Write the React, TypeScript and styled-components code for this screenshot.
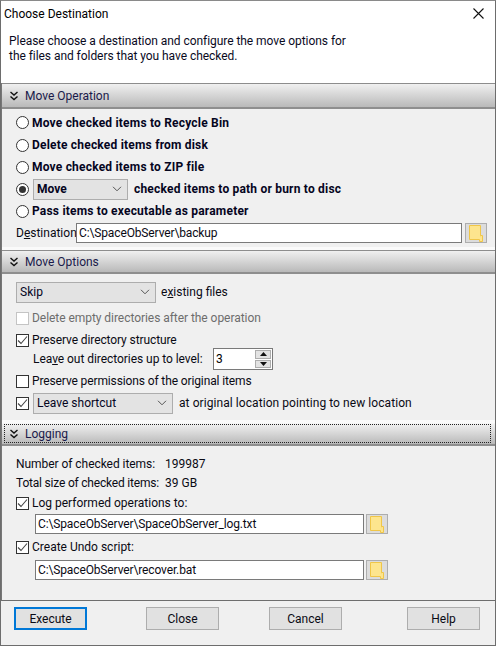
import React from "react";
import styled, { createGlobalStyle } from "styled-components";

const Global = createGlobalStyle`
  html, body { margin: 0; padding: 0; background: #fff; }
  body { font-family: Roboto, "Noto Sans", "Liberation Sans", sans-serif; font-size: 12px; color: #000; }
  * { box-sizing: border-box; }
`;

const Window = styled.div`
  width: 496px; height: 646px; display: flex; flex-direction: column;
  border: 1px solid #6d6d6d; border-top-color: #8a8a8a; background: #f0f0f0; overflow: hidden;
`;
const TitleBar = styled.div`
  height: 25px; flex: none; background: #fff; display: flex; align-items: center; justify-content: space-between;
  padding: 0 11px 0 3px; font-size: 12px;
`;
const Intro = styled.div`
  height: 57px; flex: none; background: #fff; padding: 8px 8px 0; line-height: 15px; font-size: 12px; color: #0a0a1e;
  letter-spacing: -0.05px;
`;
const Content = styled.div`
  flex: 1; display: flex; flex-direction: column; border-left: 1px solid #777; border-bottom: 1px solid #6e6e6e; min-height: 0;
`;
const Band = styled.div<{ $focus?: boolean; $h: number }>`
  position: relative;
  height: ${p => p.$h}px; flex: none; display: flex; align-items: center; gap: 6px; padding: 0 0 0 7px;
  font-size: 12px; color: #1a1a4a;
  border-top: 1px solid ${p => p.$focus ? "#f6f6f6" : "#8d8d8d"};
  border-bottom: 2px solid #8e8e8e;
  background: linear-gradient(#f0f0f0, #b9b9b9);
  ${p => p.$focus ? `&::after { content: ""; position: absolute; inset: 0 4px 1px 2px; border: 1px dotted #222; }` : ""}
`;
const WhiteGap = styled.div`
  height: 3px; flex: none; background: #fafafa;
`;
const Section = styled.div<{ $h: number; $top: number }>`
  height: ${p => p.$h}px; flex: none; display: flex; flex-direction: column; padding: ${p => p.$top}px 0 0 14px;
`;
const Row = styled.div<{ $h: number; $indent?: number; $gap?: number; $mt?: number; $mb?: number }>`
  height: ${p => p.$h}px; flex: none; display: flex; align-items: center;
  gap: ${p => p.$gap ?? 2}px; padding-left: ${p => p.$indent ?? 0}px; white-space: nowrap;
  margin-top: ${p => p.$mt ?? 0}px; margin-bottom: ${p => p.$mb ?? 0}px;
`;
const Radio = styled.span<{ $on?: boolean }>`
  width: 13px; height: 13px; flex: none; border-radius: 50%; border: 1px solid #333; background: #fff;
  display: flex; align-items: center; justify-content: center;
  &::after { content: ""; width: 7px; height: 7px; border-radius: 50%; background: ${p => p.$on ? "#333" : "transparent"}; }
`;
const Box = styled.span<{ $disabled?: boolean }>`
  width: 13px; height: 13px; flex: none; border: 1px solid ${p => p.$disabled ? "#c4c4c4" : "#333"};
  background: #fff; display: flex; align-items: center; justify-content: center;
`;
const Bold = styled.span<{ $ml?: number }>`
  font-weight: 700; color: #05051e; margin-left: ${p => p.$ml ?? 1}px; font-size: 12px; letter-spacing: 0.2px;
`;
const Label = styled.span<{ $ml?: number; $muted?: boolean; $w?: number; $ls?: number }>`
  margin-left: ${p => p.$ml ?? 0}px; color: ${p => p.$muted ? "#6d6d6d" : "#0a0a14"};
  letter-spacing: ${p => p.$ls ?? 0}px;
  ${p => p.$w ? `width: ${p.$w}px; flex: none;` : ""}
`;
const Select = styled.div<{ $w: number; $bold?: boolean; $ml?: number }>`
  width: ${p => p.$w}px; height: 21px; flex: none; background: #e3e3e3; border: 1px solid #adadad;
  margin-left: ${p => p.$ml ?? 0}px;
  display: flex; align-items: center; justify-content: space-between; padding: 0 5px 0 3px;
  font-weight: ${p => p.$bold ? 700 : 400}; color: #05051e;
`;
const Input = styled.div<{ $w: number; $mr?: number }>`
  width: ${p => p.$w}px; height: 20px; flex: none; background: #fff; border: 1px solid #7a7a7a;
  margin-right: ${p => p.$mr ?? 0}px; display: flex; align-items: center; padding-left: 2px; color: #0a0a14;
  letter-spacing: -0.13px;
`;
const Browse = styled.div`
  width: 22px; height: 20px; flex: none; background: #dcdcdc; border: 1px solid #adadad; display: flex; align-items: center; justify-content: center;
`;
const Spin = styled.div`
  width: 60px; height: 22px; flex: none; background: #fff; border: 1px solid #7a7a7a;
  display: flex; align-items: center; justify-content: space-between; padding: 1px 1px 1px 2px;
`;
const SpinButtons = styled.div`
  width: 16px; height: 18px; display: flex; flex-direction: column; gap: 1px;
`;
const SpinBtn = styled.div`
  flex: 1; background: #e3e3e3; border: 1px solid #adadad; display: flex; align-items: center; justify-content: center;
`;
const Footer = styled.div`
  height: 44px; flex: none; display: flex; padding: 6px 0 0 13px;
`;
const Button = styled.div<{ $primary?: boolean; $ml: number }>`
  width: 73px; height: 23px; flex: none; margin-left: ${p => p.$ml}px;
  display: flex; align-items: center; justify-content: center; background: #e1e1e1; color: #0a0a14;
  border: ${p => p.$primary ? "2px solid #0078d7" : "1px solid #adadad"};
`;
const U = styled.span`text-decoration: underline;`;

const Chevrons = () => (
  <svg width="10" height="10" viewBox="0 0 10 10" fill="none" stroke="#111" strokeWidth="1.4">
    <path d="M1.5 1l3.5 3 3.5-3M1.5 5.5l3.5 3 3.5-3" />
  </svg>
);
const Caret = () => (
  <svg width="10" height="6" viewBox="0 0 10 6" fill="none" stroke="#555" strokeWidth="1">
    <path d="M1 .8l4 4 4-4" />
  </svg>
);
const Check = () => (
  <svg width="11" height="11" viewBox="0 0 11 11" fill="none" stroke="#444" strokeWidth="1.1">
    <path d="M1 5.5l3 3 6-7" />
  </svg>
);
const Folder = () => (
  <svg width="14" height="17" viewBox="0 0 14 17">
    <path d="M.5.5h11v14h-11z" fill="#fde58e" stroke="#f0c648" />
    <path d="M11.5 10.5h2v6h-3v-2" fill="#fde58e" stroke="#f0c648" />
  </svg>
);
const Close = () => (
  <svg width="11" height="11" viewBox="0 0 11 11" stroke="#111" strokeWidth="1.1"><path d="M.5.5l10 10M10.5.5l-10 10" /></svg>
);
const Tri = ({ up }: { up?: boolean }) => (
  <svg width="7" height="4" viewBox="0 0 7 4" fill="#111"><path d={up ? "M3.5 0L7 4H0z" : "M0 0h7L3.5 4z"} /></svg>
);

export default function App() {
  return (
    <Window>
      <Global />
      <TitleBar>
        <span>Choose Destination</span>
        <Close />
      </TitleBar>
      <Intro>
        Please choose a destination and configure the move options for<br />
        the files and folders that you have checked.
      </Intro>
      <Content>
        <Band $h={26}><Chevrons /><span>Move Operation</span></Band>
        <Section $h={138} $top={2}>
          <Row $h={23}><Radio /><Bold>Move checked items to Recycle Bin</Bold></Row>
          <Row $h={22}><Radio /><Bold>Delete checked items from disk</Bold></Row>
          <Row $h={22}><Radio /><Bold>Move checked items to ZIP file</Bold></Row>
          <Row $h={22}>
            <Radio $on />
            <Select $w={95} $bold $ml={2}><span>Move</span><Caret /></Select>
            <Bold $ml={4}>checked items to path or burn to disc</Bold>
          </Row>
          <Row $h={22}><Radio /><Bold>Pass items to executable as parameter</Bold></Row>
          <Row $h={22} $gap={0}>
            <Label $w={60}>D<U>e</U>stination</Label>
            <Input $w={386} $mr={3}>C:\SpaceObServer\backup</Input>
            <Browse><Folder /></Browse>
          </Row>
        </Section>
        <WhiteGap />
        <Band $h={24}><Chevrons /><span>Move Options</span></Band>
        <Section $h={146} $top={6}>
          <Row $h={24}>
            <Select $w={140}><span>Skip</span><Caret /></Select>
            <Label $ml={3}>e<U>x</U>isting files</Label>
          </Row>
          <Row $h={22} $mt={3}><Box $disabled /><Label $ml={1} $muted $ls={-0.05}>Delete empty directories after the operation</Label></Row>
          <Row $h={22}><Box><Check /></Box><Label $ml={1} $ls={-0.1}>Preserve directory structure</Label></Row>
          <Row $h={16} $indent={17} $mb={3} $gap={0}>
            <Label $w={180} $ls={-0.05}>Lea<U>v</U>e out directories up to level:</Label>
            <Spin><span>3</span><SpinButtons><SpinBtn><Tri up /></SpinBtn><SpinBtn><Tri /></SpinBtn></SpinButtons></Spin>
          </Row>
          <Row $h={22}><Box /><Label $ml={1} $ls={-0.12}>Preserve permissions of the original items</Label></Row>
          <Row $h={22}>
            <Box><Check /></Box>
            <Select $w={140} $ml={2}><span>Leave shortcut</span><Caret /></Select>
            <Label $ml={4} $ls={0.07}>at original location pointing to new location</Label>
          </Row>
        </Section>
        <WhiteGap />
        <Band $focus $h={23}><Chevrons /><span>Logging</span></Band>
        <Section $h={156} $top={8}>
          <Row $h={19} $gap={0}><Label $w={149} $ls={-0.05}>Number of checked items:</Label><Label>199987</Label></Row>
          <Row $h={19} $gap={0}><Label $w={149} $ls={-0.2}>Total size of checked items:</Label><Label>39 GB</Label></Row>
          <Row $h={22}><Box><Check /></Box><Label $ml={1}>Log performed operations to:</Label></Row>
          <Row $h={20} $indent={19}>
            <Input $w={329}>C:\SpaceObServer\SpaceObServer_log.txt</Input>
            <Browse><Folder /></Browse>
          </Row>
          <Row $h={26}><Box><Check /></Box><Label $ml={1}>Create Undo script:</Label></Row>
          <Row $h={20} $indent={19}>
            <Input $w={329}>C:\SpaceObServer\recover.bat</Input>
            <Browse><Folder /></Browse>
          </Row>
        </Section>
      </Content>
      <Footer>
        <Button $primary $ml={0}>Execute</Button>
        <Button $ml={59}>Close</Button>
        <Button $ml={50}>Cancel</Button>
        <Button $ml={65}>Help</Button>
      </Footer>
    </Window>
  );
}
